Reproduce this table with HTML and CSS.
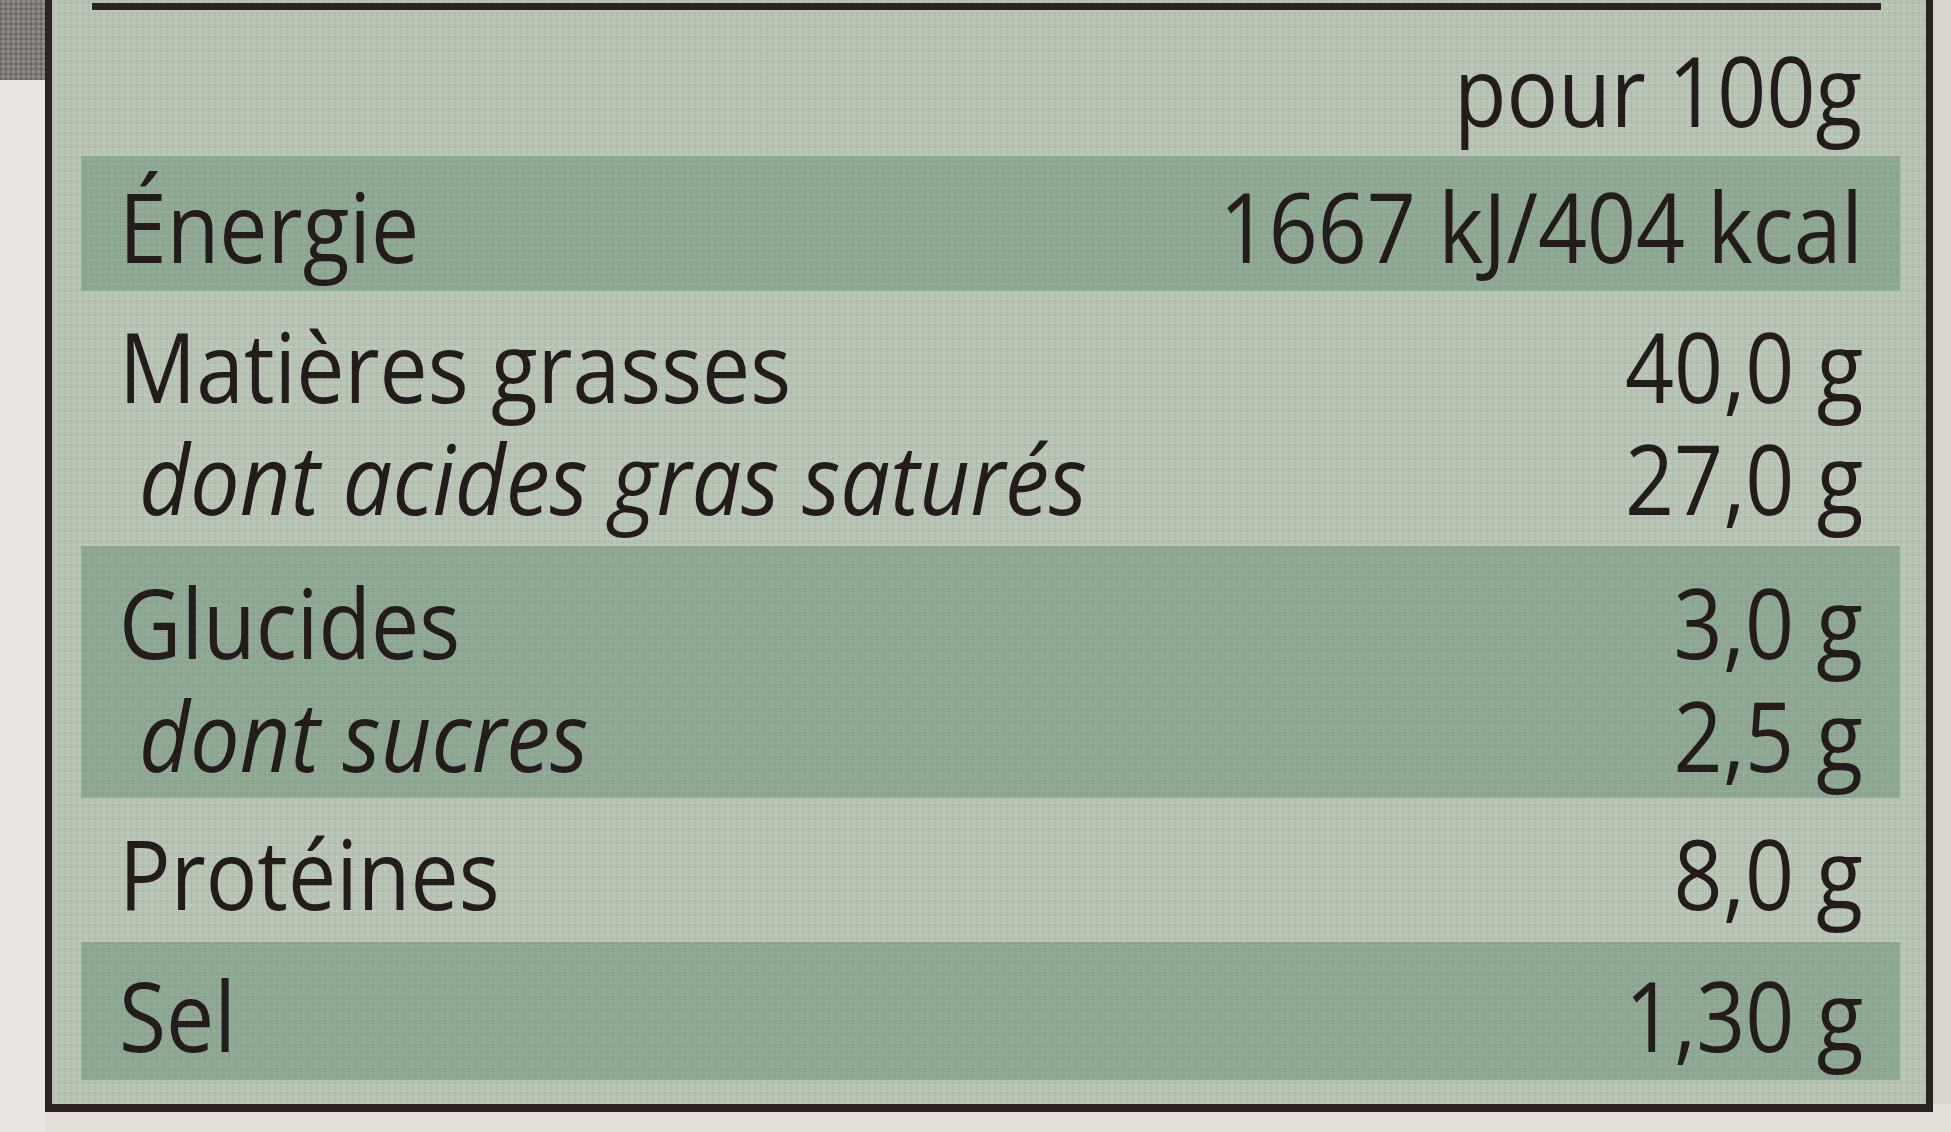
FILE: index.html
```html
<!DOCTYPE html>
<html lang="fr">
<head>
<meta charset="utf-8">
<title>Valeurs nutritionnelles</title>
<link rel="stylesheet" href="styles.css">
</head>
<body>
<div class="sheet">
  <div class="edge">
    <div class="edge-shade"></div>
  </div>
  <div class="card">
    <div class="rule"></div>
    <div class="head"><span class="value">pour 100g</span></div>
    <div class="group band band-one">
      <div class="line"><span class="label">Énergie</span><span class="value">1667 kJ/404 kcal</span></div>
    </div>
    <div class="group plain fat">
      <div class="line"><span class="label">Matières grasses</span><span class="value">40,0 g</span></div>
      <div class="line sub"><span class="label">dont acides gras saturés</span><span class="value">27,0 g</span></div>
    </div>
    <div class="group band carbs">
      <div class="line"><span class="label">Glucides</span><span class="value">3,0 g</span></div>
      <div class="line sub"><span class="label">dont sucres</span><span class="value">2,5 g</span></div>
    </div>
    <div class="group plain protein">
      <div class="line"><span class="label">Protéines</span><span class="value">8,0 g</span></div>
    </div>
    <div class="group band salt">
      <div class="line"><span class="label">Sel</span><span class="value">1,30 g</span></div>
    </div>
  </div>
  <div class="edge-right"></div>
</div>
</body>
</html>
```
FILE: styles.css
```css
html, body {
  margin: 0;
  padding: 0;
}
body {
  width: 1951px;
  height: 1132px;
  overflow: hidden;
  background: #e4e0d9;
  font-family: "Open Sans", "Noto Sans", sans-serif;
  color: #241c1a;
}
.sheet {
  display: flex;
  align-items: flex-start;
  height: 1132px;
}
.edge {
  width: 45px;
  height: 1132px;
  flex: none;
  background: #e9e5e0;
}
.edge-shade {
  height: 80px;
  background-color: #8e8a86;
  background-image:
    repeating-linear-gradient(0deg, rgba(60,55,52,0.25) 0 2px, transparent 2px 5px),
    repeating-linear-gradient(90deg, rgba(60,55,52,0.25) 0 2px, transparent 2px 5px);
}
.card {
  width: 1888px;
  height: 1112px;
  flex: none;
  box-sizing: border-box;
  border-left: 7px solid #2b2321;
  border-right: 7px solid #2b2321;
  border-bottom: 8px solid #2b2321;
  background-color: #b7c4b4;
  background-image:
    repeating-linear-gradient(0deg, rgba(255,255,255,0.07) 0 2px, transparent 2px 6px),
    repeating-linear-gradient(90deg, rgba(90,110,95,0.07) 0 2px, transparent 2px 6px);
  font-size: 97px;
}
.edge-right {
  flex: 1;
  height: 1104px;
  background: #d9d5cf;
}
.rule {
  height: 7px;
  margin: 3px 45px 0 40px;
  background: #2b2321;
}
.head {
  height: 146px;
  box-sizing: border-box;
  padding: 12px 64px 0 0;
  line-height: 134px;
  display: flex;
  justify-content: flex-end;
  white-space: nowrap;
}
.label,
.value {
  display: inline-block;
  transform: scaleX(0.885);
}
.label {
  transform-origin: left center;
}
.value {
  transform-origin: right center;
}
.group {
  margin: 0 26px 0 29px;
  padding: 0 37px 0 38px;
  box-sizing: border-box;
}
.band {
  background-color: #8ba590;
  background-image:
    repeating-linear-gradient(0deg, rgba(180,200,185,0.12) 0 2px, transparent 2px 6px),
    repeating-linear-gradient(90deg, rgba(180,200,185,0.12) 0 2px, transparent 2px 6px);
}
.line {
  display: flex;
  justify-content: space-between;
  white-space: nowrap;
}
.sub .label {
  font-style: italic;
  padding-left: 22px;
  transform: scaleX(0.91);
}
.band-one {
  height: 135px;
  padding-top: 4px;
}
.band-one .line {
  line-height: 131px;
}
.fat {
  height: 255px;
  padding-top: 18px;
}
.fat .line {
  line-height: 112px;
}
.carbs {
  height: 252px;
  padding-top: 19px;
}
.carbs .line {
  line-height: 113px;
}
.protein {
  height: 144px;
  padding-top: 4px;
}
.protein .line {
  line-height: 140px;
}
.salt {
  height: 138px;
  padding-top: 6px;
}
.salt .line {
  line-height: 132px;
}
```
